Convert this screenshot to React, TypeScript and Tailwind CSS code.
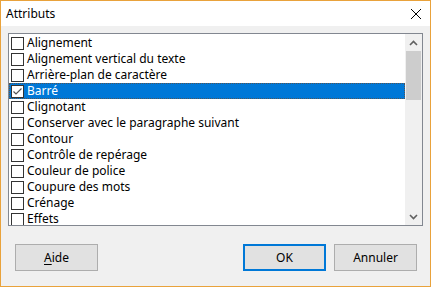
import React from "react";

const items = [
  "Alignement",
  "Alignement vertical du texte",
  "Arrière-plan de caractère",
  "Barré",
  "Clignotant",
  "Conserver avec le paragraphe suivant",
  "Contour",
  "Contrôle de repérage",
  "Couleur de police",
  "Coupure des mots",
  "Crénage",
  "Effets",
];

function Row({ label, selected }: { label: string; selected: boolean }) {
  return (
    <div
      className={
        "h-[16px] shrink-0 flex items-center pl-[2px] " +
        (selected ? "bg-[#0078d7] text-white outline outline-1 outline-dotted outline-[#555] -outline-offset-1" : "text-black")
      }
    >
      <div className="w-[13px] h-[13px] border border-[#333] bg-white flex items-center justify-center shrink-0">
        {selected && (
          <svg width="11" height="11" viewBox="0 0 11 11">
            <path d="M1.5 5.5 L4 8 L9.5 2.5" fill="none" stroke="#555" strokeWidth="1.2" />
          </svg>
        )}
      </div>
      <span className="ml-[3px] whitespace-nowrap leading-none">{label}</span>
    </div>
  );
}

export default function App() {
  return (
    <div
      className="w-[431px] h-[287px] border border-[#e9a23b] bg-[#f0f0f0] flex flex-col text-[12px] text-black"
      style={{ fontFamily: '"Noto Sans", "Open Sans", sans-serif' }}
    >
      <div className="h-[25px] bg-white flex items-center justify-between pl-[5px] pr-[8px] shrink-0">
        <span className="text-[12px]">Attributs</span>
        <svg width="12" height="12" viewBox="0 0 12 12">
          <path d="M1 1 L11 11 M11 1 L1 11" stroke="#000" strokeWidth="1" />
        </svg>
      </div>
      <div className="flex flex-col px-[7px] pt-[7px]">
        <div className="h-[193px] border border-[#828790] bg-white flex">
          <div className="flex-1 flex flex-col overflow-hidden pt-[1px]">
            {items.map((it) => (
              <Row key={it} label={it} selected={it === "Barré"} />
            ))}
          </div>
          <div className="w-[17px] bg-[#f0f0f0] flex flex-col shrink-0">
            <div className="h-[17px] flex items-center justify-center">
              <svg width="9" height="6" viewBox="0 0 9 6">
                <path d="M1 5 L4.5 1.5 L8 5" fill="none" stroke="#606060" strokeWidth="1.6" />
              </svg>
            </div>
            <div className="h-[49px] bg-[#cdcdcd] mx-[1px]" />
            <div className="flex-1" />
            <div className="h-[17px] flex items-center justify-center">
              <svg width="9" height="6" viewBox="0 0 9 6">
                <path d="M1 1 L4.5 4.5 L8 1" fill="none" stroke="#606060" strokeWidth="1.6" />
              </svg>
            </div>
          </div>
        </div>
      </div>
      <div className="flex items-center pl-[14px] pr-[13px] mt-[18px]">
        <button className="w-[83px] h-[27px] bg-[#e1e1e1] border border-[#adadad] text-[12px]">
          <span className="underline underline-offset-2">A</span>ide
        </button>
        <div className="flex-1" />
        <button className="w-[83px] h-[27px] bg-[#e1e1e1] border-2 border-[#0078d7] text-[12px]">
          OK
        </button>
        <button className="w-[83px] h-[27px] bg-[#e1e1e1] border border-[#adadad] text-[12px] ml-[8px]">
          Annuler
        </button>
      </div>
    </div>
  );
}
